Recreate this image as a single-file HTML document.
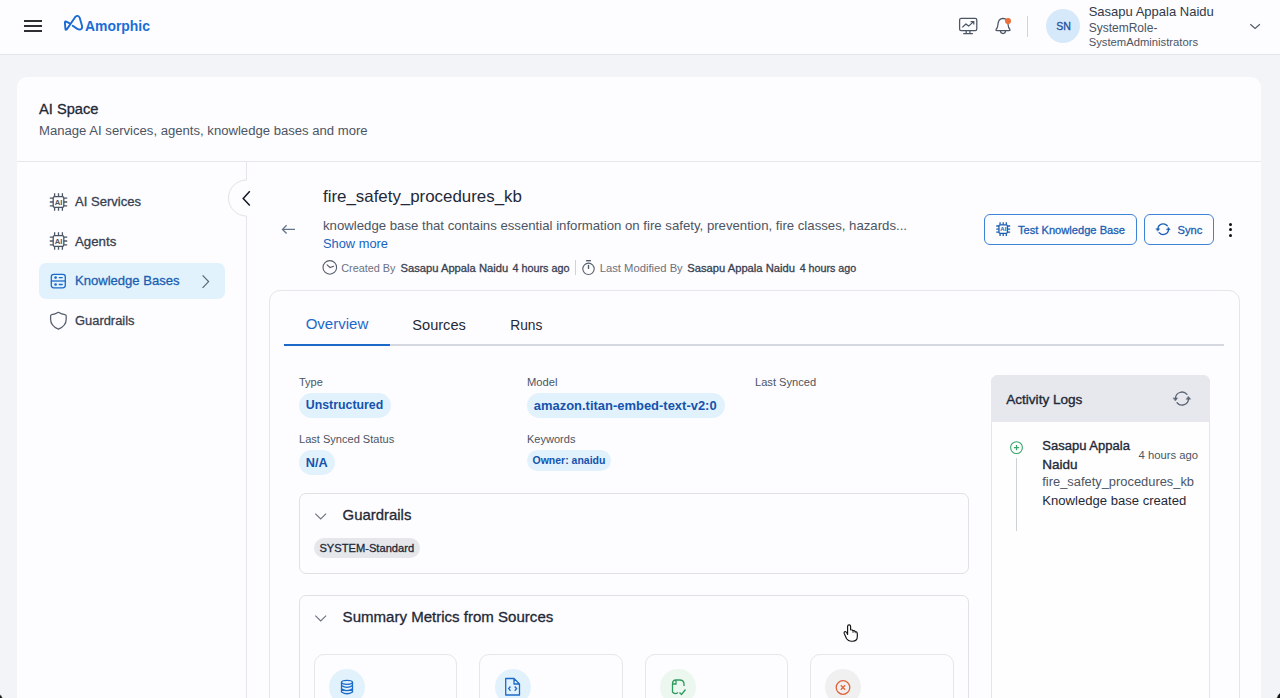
<!DOCTYPE html>
<html><head><meta charset="utf-8"><style>
*{margin:0;padding:0;box-sizing:border-box}
html,body{width:1280px;height:698px;overflow:hidden;background:#f3f4f7;font-family:"Liberation Sans",sans-serif}
.a{position:absolute}
.t{position:absolute;white-space:nowrap;line-height:1}
svg{position:absolute;overflow:visible}
</style></head><body>
<!-- header -->
<div class="a" style="left:0;top:0;width:1280px;height:55px;background:#fdfcfe;border-bottom:1px solid #e4e5ea"></div>
<!-- hamburger -->
<div class="a" style="left:24.3px;top:20.4px;width:17.6px;height:1.7px;background:#2e2e33"></div>
<div class="a" style="left:24.3px;top:25.4px;width:17.6px;height:1.7px;background:#2e2e33"></div>
<div class="a" style="left:24.3px;top:30.4px;width:17.6px;height:1.7px;background:#2e2e33"></div>
<!-- logo icon -->
<svg style="left:0;top:0" width="1" height="1"><path d="M72.7 25.8 L77.3 28.9 Q80 30.4 81.6 28.6 Q82.4 27.6 82 25.8 L79.6 17.6 Q78 14.6 75.4 16.8 L66.8 29.4 Q65.6 30.6 65.4 29 L64.9 22.6 Q64.9 21 66.2 21.6 L69.3 23.2" fill="none" stroke="#1a6ad6" stroke-width="1.9" stroke-linejoin="round" stroke-linecap="round"/></svg>
<!-- monitor icon -->
<svg style="left:0;top:0" width="1" height="1" fill="none" stroke="#4b5563" stroke-width="1.25">
<rect x="959.6" y="18.4" width="17.2" height="12.3" rx="1.6"/>
<path d="M966.2 30.8 V33.4 M969.9 30.8 V33.4 M963.2 33.7 H972.9"/>
<path d="M962.3 27.4 L965.9 24 L968.6 26.1 L973.6 21.6 M970.6 21.5 H973.8 V24.6" stroke-linejoin="round"/>
</svg>
<!-- bell -->
<svg style="left:0;top:0" width="1" height="1" fill="none" stroke="#4b5563" stroke-width="1.25">
<path d="M996.2 29.3 Q997.6 28 997.9 24.8 Q998.3 18.6 1003 18.4 Q1007.7 18.6 1008.1 24.8 Q1008.4 28 1009.8 29.3 Q1010.6 30.6 1009 30.6 H997 Q995.4 30.6 996.2 29.3 Z" stroke-linejoin="round"/>
<path d="M1000.4 30.8 Q1000.6 33.5 1003 33.5 Q1005.4 33.5 1005.6 30.8"/>
</svg>
<div class="a" style="left:1005px;top:17.8px;width:5.8px;height:5.8px;border-radius:50%;background:#e8703a"></div>
<div class="a" style="left:1026.5px;top:15.5px;width:1.2px;height:21px;background:#cfd3da"></div>
<!-- avatar -->
<div class="a" style="left:1046px;top:9px;width:34px;height:34px;border-radius:50%;background:#d6e9fb"></div>
<!-- chevron -->
<svg style="left:0;top:0" width="1" height="1"><path d="M1250.3 24.2 L1255.1 28.5 L1259.9 24.2" fill="none" stroke="#525b69" stroke-width="1.15"/></svg>

<!-- main card -->
<div class="a" style="left:17px;top:77px;width:1244px;height:640px;background:#fdfcfe;border-radius:10px"></div>
<div class="a" style="left:17px;top:161px;width:1244px;height:1px;background:#e6e7eb"></div>
<div class="a" style="left:246px;top:162px;width:1px;height:18px;background:#e3e5ea"></div><div class="a" style="left:246px;top:216px;width:1px;height:500px;background:#e3e5ea"></div>
<!-- collapse button -->
<svg style="left:0;top:0" width="1" height="1"><path d="M246.5 180 A18 18 0 0 0 246.5 216" fill="#fdfcfe" stroke="#e1e3e8" stroke-width="1"/>
<path d="M249.8 191.2 L243.2 198.4 L249.8 205.6" fill="none" stroke="#111827" stroke-width="1.5"/></svg>

<!-- sidebar icons -->
<svg style="left:0;top:0" width="1" height="1" fill="none" stroke="#4b5563" stroke-width="1.3"><rect x="53.20" y="196.70" width="10.60" height="10.60" rx="1.60"/><path d="M54.60 193.30V196.70 M54.60 207.30V210.70 M49.80 198.10H53.20 M63.80 198.10H67.20 M58.50 193.30V196.70 M58.50 207.30V210.70 M49.80 202.00H53.20 M63.80 202.00H67.20 M62.40 193.30V196.70 M62.40 207.30V210.70 M49.80 205.90H53.20 M63.80 205.90H67.20"/><text x="58.60" y="204.95" font-family="Liberation Sans" font-weight="700" font-size="7.63" fill="#4b5563" stroke="none" text-anchor="middle" letter-spacing="0">AI</text></svg>
<svg style="left:0;top:0" width="1" height="1" fill="none" stroke="#4b5563" stroke-width="1.3"><rect x="53.20" y="235.70" width="10.60" height="10.60" rx="1.60"/><path d="M54.60 232.30V235.70 M54.60 246.30V249.70 M49.80 237.10H53.20 M63.80 237.10H67.20 M58.50 232.30V235.70 M58.50 246.30V249.70 M49.80 241.00H53.20 M63.80 241.00H67.20 M62.40 232.30V235.70 M62.40 246.30V249.70 M49.80 244.90H53.20 M63.80 244.90H67.20"/><text x="58.60" y="243.95" font-family="Liberation Sans" font-weight="700" font-size="7.63" fill="#4b5563" stroke="none" text-anchor="middle" letter-spacing="0">AI</text></svg>
<!-- KB highlight -->
<div class="a" style="left:39px;top:263px;width:185.5px;height:35.5px;border-radius:7px;background:#e1f2fc"></div>
<svg style="left:0;top:0" width="1" height="1" fill="none" stroke="#1b6ac9" stroke-width="1.3">
<rect x="51.3" y="274.3" width="14" height="13.5" rx="2.5"/>
<path d="M51.3 281 H65.3"/>
<circle cx="55.6" cy="277.6" r="1.3" fill="#1b6ac9" stroke="none"/><circle cx="55.6" cy="284.5" r="1.3" fill="#1b6ac9" stroke="none"/><path d="M59.3 277.6 H62.2 M59.3 284.5 H62.2" stroke-linecap="round" stroke-width="1.4"/>
</svg>
<svg style="left:0;top:0" width="1" height="1"><path d="M202.6 275.3 L208.6 281.6 L202.6 287.9" fill="none" stroke="#5a6372" stroke-width="1.2"/></svg>
<!-- shield -->
<svg style="left:0;top:0" width="1" height="1"><path d="M58.4 312.3 Q61.8 314.3 65 314.6 Q66.2 314.8 66.2 316 V319.2 Q66.2 325.8 58.4 329.1 Q50.6 325.8 50.6 319.2 V316 Q50.6 314.8 51.8 314.6 Q55 314.3 58.4 312.3 Z" fill="none" stroke="#545d6b" stroke-width="1.25" stroke-linejoin="round"/></svg>

<!-- back arrow -->
<svg style="left:0;top:0" width="1" height="1"><path d="M295 229.4 H282.5 M286.6 225.3 L282.5 229.4 L286.6 233.5" fill="none" stroke="#64748b" stroke-width="1.3"/></svg>
<!-- clock icons -->
<svg style="left:0;top:0" width="1" height="1" fill="none" stroke="#565f6d" stroke-width="1.1">
<circle cx="329.8" cy="267.4" r="6.8"/>
<path d="M327.1 264.8 L330 267.5 L333.6 266.2" stroke-linecap="round"/>
<circle cx="588.5" cy="268.8" r="5.7"/>
<path d="M586.1 260.7 H590.9" stroke-width="1.4"/><path d="M588.5 265.4 V268.4" stroke-width="1.4" stroke-linecap="round"/>
</svg>
<div class="a" style="left:575px;top:260px;width:1px;height:14.6px;background:#cdd3dc"></div>

<!-- buttons -->
<div class="a" style="left:984px;top:214px;width:153px;height:30.5px;border:1.2px solid #3f83d6;border-radius:6px"></div>
<div class="a" style="left:1144px;top:214px;width:70px;height:30.5px;border:1.2px solid #3f83d6;border-radius:6px"></div>
<svg style="left:0;top:0" width="1" height="1" fill="none" stroke="#1b5fb3" stroke-width="1.3"><rect x="998.96" y="224.86" width="8.48" height="8.48" rx="1.28"/><path d="M1000.08 222.14V224.86 M1000.08 233.34V236.06 M996.24 225.98H998.96 M1007.44 225.98H1010.16 M1003.20 222.14V224.86 M1003.20 233.34V236.06 M996.24 229.10H998.96 M1007.44 229.10H1010.16 M1006.32 222.14V224.86 M1006.32 233.34V236.06 M996.24 232.22H998.96 M1007.44 232.22H1010.16"/><text x="1003.30" y="231.46" font-family="Liberation Sans" font-weight="700" font-size="6.10" fill="#1b5fb3" stroke="none" text-anchor="middle" letter-spacing="0">AI</text></svg>
<svg style="left:0;top:0" width="1" height="1" fill="none" stroke="#1b5fb3" stroke-width="1.3" stroke-linecap="round">
<path d="M1167.26 225.79 A5.3 5.3 0 0 0 1157.90 229.20 M1159.14 232.61 A5.3 5.3 0 0 0 1168.50 229.20"/>
<path d="M1156.15 228.68 L1159.65 228.68 L1157.90 230.95 Z M1166.75 229.72 L1170.25 229.72 L1168.50 227.45 Z" fill="#1b5fb3" stroke-width="0.5" stroke-linejoin="round"/>
</svg>
<div class="a" style="left:1229.2px;top:222.6px;width:3px;height:3px;border-radius:50%;background:#111"></div>
<div class="a" style="left:1229.2px;top:227.9px;width:3px;height:3px;border-radius:50%;background:#111"></div>
<div class="a" style="left:1229.2px;top:233.5px;width:3px;height:3px;border-radius:50%;background:#111"></div>

<!-- tab card -->
<div class="a" style="left:269px;top:289.5px;width:971px;height:500px;border:1px solid #e4e6eb;border-radius:11px;background:#fdfcfe"></div>
<div class="a" style="left:284px;top:344px;width:940px;height:2px;background:#d5d8de"></div>
<div class="a" style="left:284px;top:343.7px;width:106px;height:2.2px;background:#1b6ac9"></div>

<!-- chips -->
<div class="a" style="left:298.7px;top:393px;width:92px;height:24.6px;border-radius:13px;background:#e2f2fd"></div>
<div class="a" style="left:527px;top:393px;width:197.5px;height:24.6px;border-radius:13px;background:#e2f2fd"></div>
<div class="a" style="left:298.7px;top:450px;width:36.5px;height:25px;border-radius:13px;background:#e2f2fd"></div>
<div class="a" style="left:527px;top:450px;width:83.8px;height:21.3px;border-radius:11px;background:#e2f2fd"></div>

<!-- guardrails accordion -->
<div class="a" style="left:298.5px;top:493px;width:670.5px;height:80.5px;border:1px solid #dfe1e6;border-radius:7px"></div>
<svg style="left:0;top:0" width="1" height="1" fill="none" stroke="#6b7280" stroke-width="1.1">
<path d="M315.3 513.6 L320.7 519 L326.1 513.6"/>
<path d="M315.3 615.6 L320.7 621 L326.1 615.6"/>
</svg>
<div class="a" style="left:313.6px;top:537.6px;width:106px;height:20.5px;border-radius:11px;background:#e5e7eb"></div>

<!-- summary accordion -->
<div class="a" style="left:298.5px;top:595px;width:670.5px;height:200px;border:1px solid #dfe1e6;border-radius:7px"></div>
<div class="a" style="left:313.8px;top:653.8px;width:143.5px;height:100px;border:1px solid #e6e7eb;border-radius:10px"></div>
<div class="a" style="left:479.3px;top:653.8px;width:143.5px;height:100px;border:1px solid #e6e7eb;border-radius:10px"></div>
<div class="a" style="left:644.8px;top:653.8px;width:143.5px;height:100px;border:1px solid #e6e7eb;border-radius:10px"></div>
<div class="a" style="left:810px;top:653.8px;width:143.5px;height:100px;border:1px solid #e6e7eb;border-radius:10px"></div>
<div class="a" style="left:329px;top:669px;width:36px;height:36px;border-radius:50%;background:#e2f2fd"></div>
<div class="a" style="left:494.5px;top:669px;width:36px;height:36px;border-radius:50%;background:#e2f2fd"></div>
<div class="a" style="left:660px;top:669px;width:36px;height:36px;border-radius:50%;background:#ecf7ef"></div>
<div class="a" style="left:825px;top:669px;width:36px;height:36px;border-radius:50%;background:#f0f0f1"></div>
<svg style="left:0;top:0" width="1" height="1" fill="none" stroke-width="1.3">
<g stroke="#1b6ac9">
<ellipse cx="347" cy="682.3" rx="5.5" ry="2"/>
<path d="M341.5 682.3 V692 Q347 695.5 352.5 692 V682.3 M341.5 685.6 Q347 689 352.5 685.6 M341.5 688.9 Q347 692.4 352.5 688.9"/>
<path d="M505.7 678.5 H514 L519.5 684 V695 H505.7 Z M514 678.5 V684 H519.5" stroke-linejoin="round"/>
<path d="M510.5 686.5 L508.6 688.6 L510.5 690.7 M514.7 686.5 L516.6 688.6 L514.7 690.7"/>
</g>
<g stroke="#2f9b5f">
<path d="M672.5 684 Q672.5 680 676 680 H679.5 Q684 680 684 684 V686 M672.5 684 V692 Q675 695 678 692.5 M676 680 V684 H672.5"/>
<path d="M679.5 692.5 L681.5 694.5 L685.5 689.5"/>
</g>
<g stroke="#e0643a">
<circle cx="843" cy="687.5" r="6.8"/>
<path d="M840.8 685.3 L845.2 689.7 M845.2 685.3 L840.8 689.7"/>
</g>
</svg>

<!-- activity logs -->
<div class="a" style="left:990.5px;top:374.5px;width:219.5px;height:400px;border:1px solid #e3e5ea;border-radius:7px;background:#fefeff"></div>
<div class="a" style="left:990.5px;top:374.5px;width:219.5px;height:47.5px;border-radius:7px 7px 0 0;background:#e6e8ee"></div>
<svg style="left:0;top:0" width="1" height="1" fill="none" stroke="#5b6472" stroke-width="1.3" stroke-linecap="round">
<path d="M1186.98 394.42 A6.5 6.5 0 0 0 1175.50 398.60 M1177.02 402.78 A6.5 6.5 0 0 0 1188.50 398.60"/>
<path d="M1173.36 397.96 L1177.64 397.96 L1175.50 400.75 Z M1186.36 399.24 L1190.64 399.24 L1188.50 396.46 Z" fill="#5b6472" stroke-width="0.5" stroke-linejoin="round"/>
</svg>
<svg style="left:0;top:0" width="1" height="1" fill="none" stroke="#38a56a" stroke-width="1.1">
<circle cx="1016.5" cy="447.6" r="5.9"/>
<path d="M1016.5 445 V450.2 M1013.9 447.6 H1019.1" stroke-width="1.2"/>
</svg>
<div class="a" style="left:1015.8px;top:458.3px;width:1.6px;height:72.5px;background:#cdd1d9"></div>

<!-- cursor -->
<svg style="left:0;top:0" width="1" height="1">
<path d="M847.6 634.5 V626.4 Q847.6 624.9 849.1 624.9 Q850.6 624.9 850.6 626.4 V629.8 Q852.3 629.6 853 630.6 Q854.6 630.4 855.2 631.5 Q857.3 631.6 857.3 633.8 V636.8 Q857.3 641.2 852.6 641.2 H851 Q848.2 641.2 846.6 638.8 L844.2 633.4 Q843.8 631.6 845.4 631.5 Q846.8 631.6 847.6 634.5 Z" fill="#fff" stroke="#111" stroke-width="1.15" stroke-linejoin="round"/>
<path d="M853 630.8 V633 M855.2 631.6 V633.2" stroke="#222" stroke-width="0.8"/>
</svg>
<svg style="left:0;top:0" width="1" height="1"><path d="M1280.5 692.3 Q1277.5 694.5 1276.3 698.5 L1280.5 698.5 Z" fill="#161616" stroke="#fff" stroke-width="0.6"/></svg>
<svg style="left:0;top:0" width="1" height="1"><path d="M-0.5 694.3 Q2.2 695.5 2.8 698.5 L-0.5 698.5 Z" fill="#161616" stroke="#fff" stroke-width="0.6"/></svg>

<div class="t g" style="left:85.00px;top:20.06px;font-size:13.93px;color:#1a6ed8;font-weight:700;">Amorphic</div>
<div class="t g" style="left:1056.20px;top:21.27px;font-size:10.58px;color:#1c4f9f;-webkit-text-stroke:0.3px #1c4f9f;">SN</div>
<div class="t g" style="left:1088.70px;top:5.13px;font-size:13.0px;color:#2f3a4a;">Sasapu Appala Naidu</div>
<div class="t g" style="left:1088.70px;top:22.07px;font-size:12px;color:#4b5563;">SystemRole-</div>
<div class="t g" style="left:1088.70px;top:36.57px;font-size:11.26px;color:#4b5563;">SystemAdministrators</div>
<div class="t g" style="left:39.00px;top:102.17px;font-size:14.64px;color:#1f2937;-webkit-text-stroke:0.3px #1f2937;">AI Space</div>
<div class="t g" style="left:39.00px;top:123.52px;font-size:13.12px;color:#4b5563;">Manage AI services, agents, knowledge bases and more</div>
<div class="t g" style="left:75.00px;top:195.19px;font-size:13.05px;color:#374151;-webkit-text-stroke:0.3px #374151;">AI Services</div>
<div class="t g" style="left:75.00px;top:234.79px;font-size:13.27px;color:#374151;-webkit-text-stroke:0.3px #374151;">Agents</div>
<div class="t g" style="left:75.00px;top:274.23px;font-size:13.07px;color:#1b5fb3;-webkit-text-stroke:0.3px #1b5fb3;">Knowledge Bases</div>
<div class="t g" style="left:75.00px;top:315.04px;font-size:12.91px;color:#374151;-webkit-text-stroke:0.3px #374151;">Guardrails</div>
<div class="t g" style="left:323.00px;top:188.73px;font-size:16.89px;color:#1f2937;">fire_safety_procedures_kb</div>
<div class="t g" style="left:323.00px;top:219.22px;font-size:13.19px;color:#4b5563;">knowledge base that contains essential information on fire safety, prevention, fire classes, hazards...</div>
<div class="t g" style="left:323.00px;top:237.94px;font-size:12.85px;color:#1565c0;">Show more</div>
<div class="t g" style="left:341.20px;top:263.19px;font-size:10.86px;color:#6b7280;">Created By</div>
<div class="t g" style="left:400.50px;top:262.71px;font-size:11.19px;color:#374151;-webkit-text-stroke:0.3px #374151;">Sasapu Appala Naidu</div>
<div class="t g" style="left:512.50px;top:263.13px;font-size:10.8px;color:#374151;-webkit-text-stroke:0.3px #374151;">4 hours ago</div>
<div class="t g" style="left:599.70px;top:262.54px;font-size:11.24px;color:#6b7280;">Last Modified By</div>
<div class="t g" style="left:687.20px;top:262.69px;font-size:11.21px;color:#374151;-webkit-text-stroke:0.3px #374151;">Sasapu Appala Naidu</div>
<div class="t g" style="left:799.70px;top:263.17px;font-size:10.7px;color:#374151;-webkit-text-stroke:0.3px #374151;">4 hours ago</div>
<div class="t g" style="left:1018.00px;top:224.73px;font-size:11.13px;color:#1b5fb3;-webkit-text-stroke:0.3px #1b5fb3;">Test Knowledge Base</div>
<div class="t g" style="left:1177.60px;top:224.78px;font-size:11.11px;color:#1b5fb3;-webkit-text-stroke:0.3px #1b5fb3;">Sync</div>
<div class="t g" style="left:305.70px;top:316.49px;font-size:15.02px;color:#1b6ac9;">Overview</div>
<div class="t g" style="left:412.30px;top:317.84px;font-size:14.58px;color:#1f2937;">Sources</div>
<div class="t g" style="left:510.30px;top:319.32px;font-size:13.75px;color:#1f2937;">Runs</div>
<div class="t g" style="left:299.00px;top:377.09px;font-size:10.97px;color:#4b5563;">Type</div>
<div class="t g" style="left:305.80px;top:399.13px;font-size:12.34px;color:#1553ad;font-weight:700;">Unstructured</div>
<div class="t g" style="left:527.00px;top:376.74px;font-size:11.19px;color:#4b5563;">Model</div>
<div class="t g" style="left:533.80px;top:399.84px;font-size:12.96px;color:#1553ad;font-weight:700;">amazon.titan-embed-text-v2:0</div>
<div class="t g" style="left:755.00px;top:376.77px;font-size:11.12px;color:#4b5563;">Last Synced</div>
<div class="t g" style="left:299.00px;top:434.08px;font-size:11.05px;color:#4b5563;">Last Synced Status</div>
<div class="t g" style="left:305.80px;top:456.90px;font-size:12.77px;color:#1553ad;font-weight:700;">N/A</div>
<div class="t g" style="left:527.00px;top:433.86px;font-size:11.04px;color:#4b5563;">Keywords</div>
<div class="t g" style="left:532.50px;top:454.51px;font-size:10.51px;color:#1553ad;font-weight:700;">Owner: anaidu</div>
<div class="t g" style="left:342.60px;top:508.25px;font-size:14.91px;color:#1f2937;-webkit-text-stroke:0.3px #1f2937;">Guardrails</div>
<div class="t g" style="left:319.40px;top:542.76px;font-size:11.15px;color:#1f2937;-webkit-text-stroke:0.3px #1f2937;">SYSTEM-Standard</div>
<div class="t g" style="left:342.60px;top:609.47px;font-size:15.06px;color:#1f2937;-webkit-text-stroke:0.3px #1f2937;">Summary Metrics from Sources</div>
<div class="t g" style="left:1006.20px;top:392.93px;font-size:13.59px;color:#1f2937;-webkit-text-stroke:0.35px #1f2937;">Activity Logs</div>
<div class="t g" style="left:1042.30px;top:439.08px;font-size:13.03px;color:#1f2937;-webkit-text-stroke:0.35px #1f2937;">Sasapu Appala</div>
<div class="t g" style="left:1042.30px;top:458.17px;font-size:13.5px;color:#1f2937;-webkit-text-stroke:0.35px #1f2937;">Naidu</div>
<div class="t g" style="left:1138.50px;top:450.18px;font-size:11.29px;color:#4b5563;">4 hours ago</div>
<div class="t g" style="left:1042.30px;top:476.28px;font-size:12.89px;color:#4b5563;">fire_safety_procedures_kb</div>
<div class="t g" style="left:1042.30px;top:494.02px;font-size:13.08px;color:#1f2937;">Knowledge base created</div>
</body></html>
